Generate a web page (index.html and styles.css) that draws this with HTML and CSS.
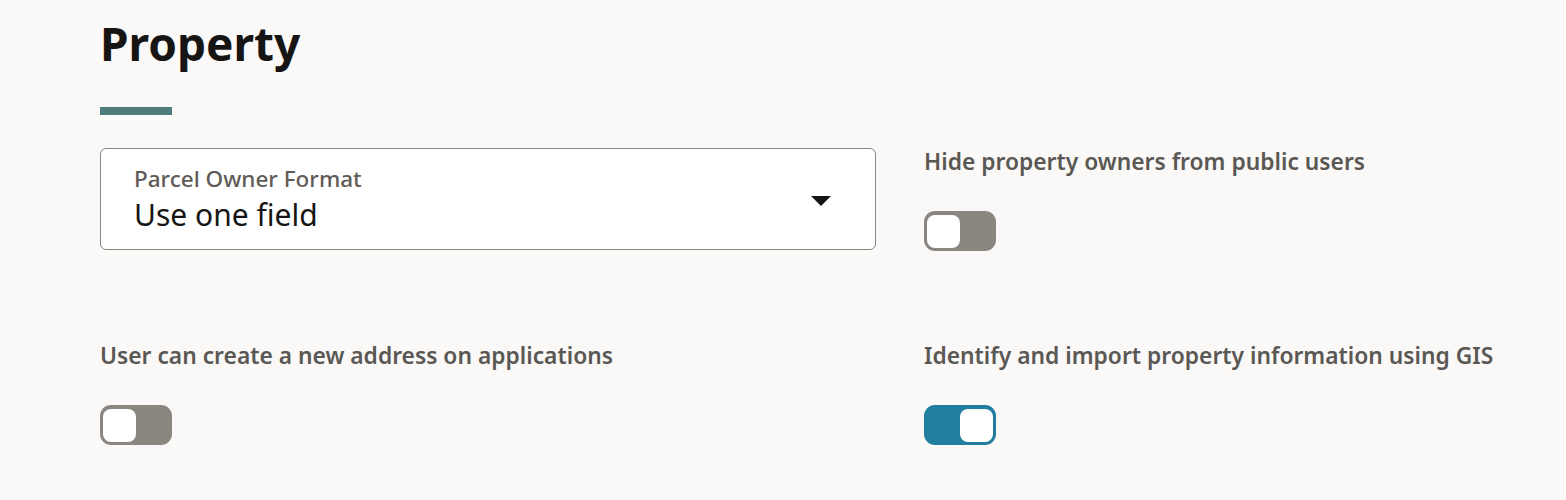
FILE: index.html
```html
<!DOCTYPE html>
<html lang="en">
<head>
    <meta charset="UTF-8">
    <meta name="viewport" content="width=device-width, initial-scale=1.0">
    <title>Property</title>
    <link rel="stylesheet" href="styles.css">
</head>
<body>
<div class="page">
    <h1 class="title">Property</h1>
    <div class="accent"></div>

    <div class="fields">
        <div class="select">
            <div class="select-text">
                <div class="select-label">Parcel Owner Format</div>
                <div class="select-value">Use one field</div>
            </div>
            <span class="caret"></span>
        </div>

        <div class="field">
            <div class="field-label">Hide property owners from public users</div>
            <button class="switch" aria-pressed="false"><span class="knob"></span></button>
        </div>

        <div class="field">
            <div class="field-label">User can create a new address on applications</div>
            <button class="switch" aria-pressed="false"><span class="knob"></span></button>
        </div>

        <div class="field">
            <div class="field-label">Identify and import property information using GIS</div>
            <button class="switch on" aria-pressed="true"><span class="knob"></span></button>
        </div>
    </div>
</div>
</body>
</html>
```

FILE: styles.css
```css
/* Property settings section */
body {
    margin: 0;
    background-color: #faf9f8;
    font-family: "Noto Sans", "Open Sans", sans-serif;
    color: #161513;
}
.page {
    padding: 15px 20px 0 100px;
}
.title {
    margin: 0;
    font-size: 46px;
    font-weight: 700;
    line-height: 56px;
}
.accent {
    width: 72px;
    height: 8px;
    margin-top: 36px;
    background-color: #4f7d7b;
}
.fields {
    display: grid;
    grid-template-columns: 776px 1fr;
    column-gap: 48px;
    row-gap: 91px;
    margin-top: 33px;
}
.select {
    display: flex;
    align-items: center;
    justify-content: space-between;
    box-sizing: border-box;
    height: 102px;
    padding: 0 44px 0 33px;
    border: 1px solid #8a8681;
    border-radius: 6px;
    background-color: #fff;
}
.select-label {
    font-size: 22.5px;
    font-weight: 500;
    color: #5f5c58;
    line-height: 31px;
}
.select-value {
    font-size: 30px;
    line-height: 41px;
}
.caret {
    width: 0;
    height: 0;
    margin-top: 4px;
    border-left: 10px solid transparent;
    border-right: 10px solid transparent;
    border-top: 10px solid #161513;
}
.field-label {
    font-size: 22.8px;
    font-weight: 600;
    color: #5a5854;
    line-height: 28px;
    white-space: nowrap;
}
.switch {
    display: flex;
    align-items: center;
    box-sizing: border-box;
    width: 72px;
    height: 40px;
    margin-top: 35px;
    padding: 0 3px;
    border: none;
    border-radius: 11px;
    background-color: #8b8680;
    cursor: pointer;
}
.switch .knob {
    width: 33px;
    height: 33px;
    border-radius: 8px;
    background-color: #fff;
}
.switch.on {
    justify-content: flex-end;
    background-color: #227e9e;
}
```
